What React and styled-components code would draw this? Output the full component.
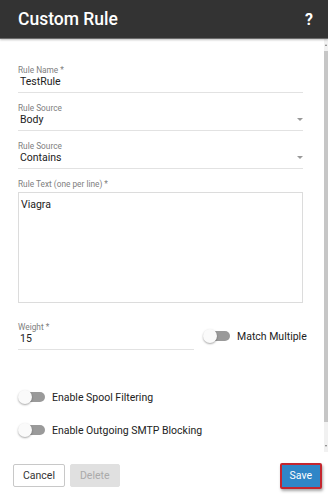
import React from "react";
import styled, { createGlobalStyle } from "styled-components";

const Global = createGlobalStyle`
  html, body {
    margin: 0;
    padding: 0;
    background: #fff;
    font-family: Roboto, "Liberation Sans", sans-serif;
  }
  * { box-sizing: border-box; }
`;

const Dialog = styled.div`
  width: 328px;
  height: 499px;
  display: flex;
  flex-direction: column;
  background: #fff;
`;

const Header = styled.div`
  height: 39px;
  flex: none;
  display: flex;
  align-items: center;
  justify-content: space-between;
  padding: 0 15px 0 18px;
  background: #333;
  border-bottom: 1px solid #6a6a6a;
  box-shadow: 0 1px 2px rgba(0, 0, 0, 0.25);
  color: #fff;
  position: relative;
  z-index: 1;
`;

const Title = styled.h1`
  margin: 0;
  font-size: 17.5px;
  font-weight: 500;
`;

const Help = styled.span`
  font-size: 16px;
  font-weight: 700;
`;

const Main = styled.div`
  height: 413px;
  flex: none;
  display: flex;
`;

const Body = styled.div`
  flex: 1;
  overflow: hidden;
  padding: 26px 21px 0 18px;
`;

const ScrollTrack = styled.div`
  width: 4px;
  flex: none;
  display: flex;
  flex-direction: column;
  align-items: center;
  background: #f1f1f1;
  padding: 2px 0;
`;

const Arrow = styled.span`
  width: 0;
  height: 0;
  margin: 3px 0;
  border-left: 1.5px solid transparent;
  border-right: 1.5px solid transparent;
  border-${(p) => (p.$down ? "top" : "bottom")}: 2px solid #777;
`;

const Thumb = styled.div`
  width: 100%;
  height: 371px;
  margin-top: 2px;
  background: #c6c6c6;
`;

const TrackRest = styled.div`
  flex: 1;
`;

const Field = styled.div`
  display: flex;
  flex-direction: column;
  flex: none;
  padding-bottom: 3px;
  border-bottom: 1px solid #e2e2e2;
  margin-top: ${(p) => p.$gap ?? 10}px;
  width: ${(p) => p.$width || "auto"};
  position: relative;
`;

const Label = styled.label`
  display: block;
  font-size: 8.3px;
  line-height: 10px;
  color: #808080;
  margin-top: ${(p) => p.$gap ?? 0}px;
`;

const Value = styled.div`
  font-size: 10.5px;
  line-height: 14px;
  color: #222;
  padding-left: 2px;
`;

const Caret = styled.span`
  position: absolute;
  right: 0;
  bottom: 9px;
  width: 0;
  height: 0;
  border-left: 3.5px solid transparent;
  border-right: 3.5px solid transparent;
  border-top: 3.5px solid #999;
`;

const TextArea = styled.div`
  margin-top: 3px;
  height: 111px;
  border: 1px solid #dcdcdc;
  padding: 5px 2px;
  font-size: 10.5px;
  line-height: 14px;
  color: #222;
`;

const Row = styled.div`
  display: flex;
  align-items: center;
  gap: 9px;
  height: ${(p) => (p.$height ? `${p.$height}px` : "auto")};
  margin-top: ${(p) => p.$gap ?? 0}px;
`;

const Switch = styled.span`
  position: relative;
  flex: none;
  width: 27px;
  height: 16px;
  display: inline-block;

  &::before {
    content: "";
    position: absolute;
    left: 4px;
    right: 0;
    top: 3px;
    height: 10px;
    border-radius: 5px;
    background: #9a9a9a;
  }
  &::after {
    content: "";
    position: absolute;
    left: 0;
    top: 1px;
    width: 14px;
    height: 14px;
    border-radius: 50%;
    background: #fafafa;
    box-shadow: 0 1px 2px rgba(0, 0, 0, 0.35);
  }
`;

const SwitchText = styled.span`
  font-size: 10.5px;
  color: #222;
  white-space: nowrap;
  margin-left: -2px;
`;

const Footer = styled.div`
  flex: 1;
  display: flex;
  align-items: center;
  padding: 0 6px 0 13px;
`;

const Button = styled.button`
  font-family: inherit;
  font-size: 10.5px;
  height: ${(p) => (p.$primary ? 26 : 23)}px;
  padding: 0 ${(p) => (p.$primary ? 8 : 9)}px;
  margin-right: 5px;
  border-radius: 2px;
  border: ${(p) =>
    p.$primary ? "2px solid #c4262e" : p.$disabled ? "1px solid #e0e0e0" : "1px solid #c8c8c8"};
  background: ${(p) => (p.$primary ? "#2f86c7" : p.$disabled ? "#e0e0e0" : "#fff")};
  color: ${(p) => (p.$primary ? "#fff" : p.$disabled ? "#aaa" : "#333")};
  box-shadow: ${(p) => (p.$primary ? "1px 2px 3px rgba(0,0,0,0.35)" : "none")};
  &:last-child { margin-right: 0; }
`;

const Spacer = styled.div`
  flex: 1;
`;

export default function App() {
  return (
    <>
      <Global />
      <Dialog>
        <Header>
          <Title>Custom Rule</Title>
          <Help>?</Help>
        </Header>
        <Main>
          <Body>
            <Field $gap={0}>
              <Label>Rule Name *</Label>
              <Value>TestRule</Value>
            </Field>
            <Field>
              <Label>Rule Source</Label>
              <Value>Body</Value>
              <Caret />
            </Field>
            <Field>
              <Label>Rule Source</Label>
              <Value>Contains</Value>
              <Caret />
            </Field>
            <Label $gap={10}>Rule Text (one per line) *</Label>
            <TextArea>Viagra</TextArea>
            <Row $gap={19}>
              <Field $gap={0} $width="176px">
                <Label>Weight *</Label>
                <Value>15</Value>
              </Field>
              <Switch />
              <SwitchText>Match Multiple</SwitchText>
            </Row>
            <Row $gap={39} $height={16}>
              <Switch />
              <SwitchText>Enable Spool Filtering</SwitchText>
            </Row>
            <Row $gap={17} $height={16}>
              <Switch />
              <SwitchText>Enable Outgoing SMTP Blocking</SwitchText>
            </Row>
          </Body>
          <ScrollTrack>
            <Arrow />
            <Thumb />
            <TrackRest />
            <Arrow $down />
          </ScrollTrack>
        </Main>
        <Footer>
          <Button>Cancel</Button>
          <Button $disabled>Delete</Button>
          <Spacer />
          <Button $primary>Save</Button>
        </Footer>
      </Dialog>
    </>
  );
}
